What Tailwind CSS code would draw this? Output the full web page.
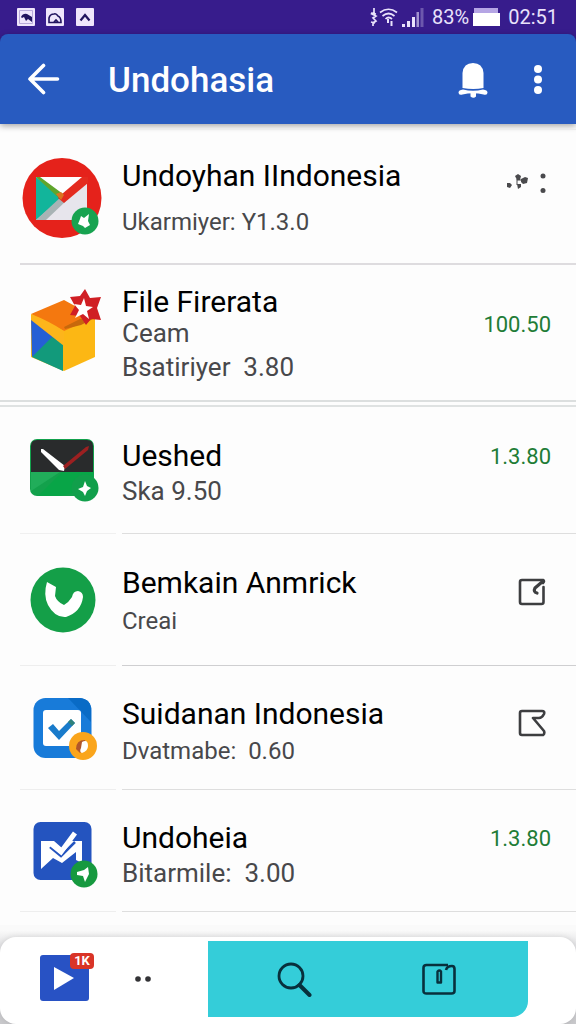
<!DOCTYPE html>
<html lang="id">
<head>
<meta charset="utf-8">
<meta name="viewport" content="width=device-width, initial-scale=1">
<title>Undohasia</title>
<script src="https://cdn.jsdelivr.net/npm/@tailwindcss/browser@4"></script>
</head>
<body class="bg-[#fdfdfd] font-[Roboto,'Liberation_Sans',sans-serif] text-black">
<div class="flex min-h-screen flex-col">
  <div class="bg-[#371c8c]">
    <div class="flex h-[34px] items-center justify-between pr-[18px] pl-[17px] text-[#e9e2fb]">
      <div class="flex items-center gap-[11px]">
        <svg class="size-[18px]" viewBox="0 0 18 18"><rect width="18" height="18" rx="1" fill="#efe6fc"/><path d="M2.500 2.500h13v13h-13z" fill="none" stroke="#a99bd0" stroke-width=".8"/><path d="M4 9q2-4 6-3l5 3v5l-4-3-2 2-2-4-2 1z" fill="#21145f"/></svg>
        <svg class="size-[18px]" viewBox="0 0 18 18"><rect width="18" height="18" rx="1" fill="#efe6fc"/><path d="M3 14.500V10q1-4 5-4 2-1 4 2 3 1 3 6.500zM8 14l2-2 2 2" fill="none" stroke="#21145f" stroke-width="1.600"/></svg>
        <svg class="ml-px size-[18px]" viewBox="0 0 18 18"><rect width="18" height="18" rx="1" fill="#efe6fc"/><path d="M4.500 12.500 9 7l4.500 5.500" fill="none" stroke="#21145f" stroke-width="2.200"/></svg>
      </div>
      <div class="flex items-center gap-1">
        <svg class="h-5 w-7" viewBox="0 0 28 20" fill="none" stroke="currentColor" stroke-width="1.700"><path d="M4 1v5l-2 1 4 2-3 2 3 3-3 2v3M1 6l5 1M1 15l4 1M10 5.500q8.500-6.500 17 0M12.500 9q6-5 12 0M15.500 12q3-3 6.500 0"/><path d="M18 12v4M21.500 14v5" stroke-width="2"/></svg>
        <svg class="h-5 w-[22px]" viewBox="0 0 22 20" fill="currentColor"><path d="M0 17h3v3H0zM5 14h3v6H5zM10 10h3v10h-3z"/><path d="M14.500 5h2.500v15h-2.500z" opacity=".6"/><path d="M18.500 1h3v19h-3z" opacity=".3"/></svg>
        <span class="ml-1 text-[20px] leading-6">83%</span>
        <svg class="h-[18px] w-[27px]" viewBox="0 0 27 18"><path fill="#b5a5e4" d="M1 0h24v5H1z"/><path fill="#fff" d="M0 5h27v13H0z"/></svg>
        <span class="ml-1 text-[20px] leading-6">02:51</span>
      </div>
    </div>
    <header class="flex h-[90px] items-center rounded-t-lg bg-[#285bc0] pr-[34px] pl-[27px] text-white shadow-[0_2px_6px_rgba(0,0,0,0.35)]">
      <button type="button" aria-label="Back" class="mr-12"><svg class="h-8 w-[33px]" viewBox="0 0 33 32" fill="none" stroke="currentColor" stroke-width="3.600" stroke-linecap="round" stroke-linejoin="round"><path d="M30.500 16H3M16.500 2.500 3 16l13.500 13.500"/></svg></button>
      <h1 class="flex-1 pt-1 text-[35px] leading-10 font-medium">Undohasia</h1>
      <button type="button" aria-label="Notifications"><svg class="h-[38px] w-[30px]" viewBox="0 0 30 38" fill="#fff"><path d="M4.500 28V13Q5.500 3 15 3t10.500 10v15q-10 2-21 0z"/><path d="M5 29.500q10 2.500 20 0 4.500.5 4.500 3 0 3-4 2Q15 32 4.500 34.500 .5 35.500 .5 32.500 .5 30 5 29.500z"/><path d="M12.500 32h5.500v4.500q-2.500 2.500-5.500 0z"/></svg></button>
      <button type="button" aria-label="More options" class="ml-[46px]"><svg class="h-8 w-2" viewBox="0 0 8 32" fill="#fff"><circle cx="4" cy="6" r="4"/><circle cx="4" cy="16.500" r="4"/><circle cx="4" cy="27" r="4"/></svg></button>
    </header>
  </div>

  <main class="flex-1">
    <ul>
      <li class="flex pt-[5px]">
        <div class="ml-5 flex flex-1 border-t border-t-[#ececec] border-b-2 border-b-[#dedcdf] pt-[28px] pb-[23px]">
          <svg class="mr-5 ml-[2px] h-[82px] w-20 shrink-0" viewBox="0 0 80 82"><ellipse cx="40" cy="40" rx="39.500" ry="40" fill="#e5221b"/><path d="M14 19h51v43H14z" fill="#e7e5ec"/><path d="M14 19h47L40 37z" fill="#fff"/><path d="M14 19v43l26-22z" fill="#12b59b"/><path d="M14 62 40 38l4 5-20 19z" fill="#a8b3b5"/><path d="m14 19 4 0 23 17-2 6z" fill="#5fa52c"/><path d="m40 36 20-17h6v6L42 45l-6-5z" fill="#e42b1f"/><path d="m34 36 5-2 3 3-3 5z" fill="#dc7420"/><circle cx="63" cy="63" r="13.500" fill="#17a350"/><path d="m59 58 3 2 5-4-1 7 2 4-5 3-2-2-5-2 2-5z" fill="#fff"/></svg>
          <div class="flex-1">
            <h2 class="text-[30px] leading-9">Undoyhan IIndonesia</h2>
            <p class="mt-3 text-[24px] leading-8 text-[#48484b]">Ukarmiyer: Y1.3.0</p>
          </div>
          <button type="button" aria-label="Options" class="mt-[15px] mr-[28px] self-start"><svg class="h-5 w-[43px]" viewBox="0 0 43 20" fill="#4a4a4d"><path d="m2 10 3 0 2 2-2 3-3-1zM10 3l3-2 3 2-1 4-3 0zM16 6l4-2 3 1-1 5-4 1-2-2zM12 11l4 0 0 3-3 2z"/><path d="M12 6v6M12 7h6" stroke="#4a4a4d"/><circle cx="38" cy="3" r="2.500"/><circle cx="38" cy="17.500" r="2.500"/></svg></button>
        </div>
      </li>
      <li class="flex items-start border-b-2 border-[#dcdfdf] pt-[22px] pr-[25px] pb-[17px]">
        <svg class="mt-[2px] mr-5 ml-[27px] h-[84px] w-[75px] shrink-0" viewBox="0 0 75 84"><path d="M4 26 37 12l31 17v39L37 82 4 68z" fill="#fcb714"/><path d="M4 25 37 11l31 17-31 14z" fill="#f4780f"/><path d="m37 38 16-8 15-1-14 7-16 4z" fill="#c7680c"/><path d="M4 28 36 55 5 68z" fill="#255fd5"/><path d="M5 68 25 48l11 7v27z" fill="#129a7b"/><path d="M4 25q18 7 33 17v15L4 31z" fill="#fdb51b"/><path d="m58 0 5 9 11-1-4 11 4 12-10-1-5 6-6-9-10-1 5-9-5-9 10-1z" fill="#d01f24"/><path d="m57 9 2 8 7 1-6 4 2 8-6-5-8 4 4-8-5-6 7 1z" fill="#fff"/></svg>
        <div class="flex-1">
          <h2 class="text-[30px] leading-[30px]">File Firerata</h2>
          <p class="text-[26px] leading-8 text-[#48484b]">Ceam</p>
          <p class="mt-[2px] text-[26px] leading-8 text-[#48484b]">Bsatiriyer&nbsp; 3.80</p>
        </div>
        <span class="mt-[22px] text-[22px] leading-8 text-[#217c36]">100.50</span>
      </li>
      <li class="mt-[3px] flex items-start border-t-2 border-[#dfe2e2] pt-[31px] pr-[25px] pb-[26px]">
        <svg class="mt-px mr-[23px] ml-[30px] h-[64px] w-[69px] shrink-0" viewBox="0 0 69 64"><rect width="64" height="57" x="0" y="0" rx="7" fill="#13a14c"/><path d="M1 33V7q0-6 6-6h50q6 0 6 6v26z" fill="#292b2c"/><path d="M8 57 32 33h31v16L30 57z" fill="#08a547"/><path d="m1 52 29-19H1z" fill="#21ad5a"/><path d="m11 10 2 0 22 17-1 5-5-1-18-18z" fill="#fff"/><path d="M33 27 56 8l3-1-1 4-23 19z" fill="#9c2021"/><circle cx="55" cy="49" r="13.500" fill="#119f4b"/><path d="m55 42 2 5 4 2-4 3-2 5-2-4-5-3 5-2z" fill="#fff"/></svg>
        <div class="flex-1">
          <h2 class="text-[30px] leading-9">Ueshed</h2>
          <p class="mt-px text-[26px] leading-8 text-[#48484b]">Ska 9.50</p>
        </div>
        <span class="mt-[3px] text-[22px] leading-8 text-[#217c36]">1.3.80</span>
      </li>
      <li class="flex items-stretch">
        <div class="ml-5 flex w-24 items-start border-t border-[#f0f0f0] pt-[33px]"><svg class="ml-[10px] size-[66px]" viewBox="0 0 66 66"><circle cx="33" cy="33" r="32.500" fill="#149f48"/><path d="m17 15 9 5-1 9q2 6 9 9 5-3 8-8 1-6 6-6 5 1 5 6-2 15-17 20-11 1-18-12-5-10-1-23z" fill="#fff"/></svg></div>
        <div class="ml-[6px] flex flex-1 items-start border-t border-[#dedede] pt-[31px] pr-[30px] pb-[28px]">
          <div class="flex-1">
            <h2 class="text-[30px] leading-9">Bemkain Anmrick</h2>
            <p class="mt-1 text-[24px] leading-8 text-[#48484b]">Creai</p>
          </div>
          <button type="button" aria-label="Open" class="mt-[13px]"><svg class="h-7 w-[28px]" viewBox="0 0 28 28" fill="none" stroke="#3d3e40" stroke-width="2.600" stroke-linejoin="round" stroke-linecap="round"><path d="M25.500 9v15q0 2-2 2H4q-2 0-2-2V4q0-2 2-2h21q2 1 0 3"/><path d="m24 4-7 6q-2 4 2 5" stroke-width="3.200"/></svg></button>
        </div>
      </li>
      <li class="flex items-stretch">
        <div class="ml-5 flex w-24 items-start border-t border-[#eeeeee] pt-[31px]"><svg class="ml-[13px] h-[66px] w-[65px]" viewBox="0 0 65 66"><rect x=".5" y="1" width="58" height="60" rx="12" fill="#187bd9"/><path d="M35 1h12q11 1 11 12v12z" fill="#096bc6"/><rect x="10" y="13" width="38" height="36" rx="3" fill="#fff"/><path d="m15 31 5-4 6 7 12-12 4 4L26 43z" fill="#197bcb"/><path d="m35 25 3-3 4 4-3 3z" fill="#30827b"/><circle cx="50" cy="49" r="14" fill="#faa51c"/><path d="M43 52q0-9 9-9l1 7-6 6z" fill="#b0562b"/><path d="M49 45q6-3 6 4 0 5-6 7-3-1-1-5z" fill="#fff"/></svg></div>
        <div class="ml-[6px] flex flex-1 items-start border-t border-[#cfcfd1] pt-[30px] pr-[30px] pb-[22px]">
          <div class="flex-1">
            <h2 class="text-[30px] leading-9">Suidanan Indonesia</h2>
            <p class="mt-[3px] text-[24px] leading-8 text-[#48484b]">Dvatmabe:&nbsp; 0.60</p>
          </div>
          <button type="button" aria-label="Open" class="mt-[13px]"><svg class="h-7 w-[28px]" viewBox="0 0 28 28" fill="none" stroke="#3d3e40" stroke-width="2.600" stroke-linejoin="round" stroke-linecap="round"><path d="M21 9q3 0 5-4 1-3-2-3H4Q2 2 2 4v20q0 2 2 2h21q2-1 1-4L15 9z"/></svg></button>
        </div>
      </li>
      <li class="flex items-stretch">
        <div class="ml-5 flex w-24 items-start border-y border-[#eeeeee] pt-[31px]"><svg class="ml-[13px] h-[67px] w-[65px]" viewBox="0 0 65 67"><rect x=".5" y="1" width="58" height="58" rx="7" fill="#2454bf"/><path d="M8 20h13l8 7 8-7h12v22l-6-3V31L29 42l-9-5L8 48z" fill="#fff"/><path d="m17 26 11 9 14-14" fill="none" stroke="#2454bf" stroke-width="2.500"/><path d="m17 22 11 9L42 12" fill="none" stroke="#fff" stroke-width="5"/><circle cx="51" cy="53" r="13.500" fill="#16993f"/><path d="m44 51 7-2 4-3 1 7-4 8-2-6-6-1z" fill="#fff"/></svg></div>
        <div class="ml-[6px] flex flex-1 items-start border-y border-[#dedede] pt-[30px] pr-[25px] pb-[22px]">
          <div class="flex-1">
            <h2 class="text-[30px] leading-9">Undoheia</h2>
            <p class="mt-px text-[26px] leading-8 text-[#48484b]">Bitarmile:&nbsp; 3.00</p>
          </div>
          <span class="mt-[3px] text-[22px] leading-8 text-[#217c36]">1.3.80</span>
        </div>
      </li>
    </ul>
  </main>

  <footer class="bg-linear-to-b from-[#fafafa] from-5% via-[#e4e4e6] via-20% to-[#c9c9cc] pt-3">
    <nav class="flex h-[87px] items-start rounded-2xl bg-white pt-1 shadow-[0_0_6px_rgba(0,0,0,0.12)]">
      <a href="#" aria-label="Videos" class="relative ml-10 pt-[14px]">
        <svg class="h-[46px] w-[49px]" viewBox="0 0 49 46"><rect width="49" height="46" rx="3" fill="#2852c4"/><path d="m14 12 20 11-20 12z" fill="#fff"/></svg>
        <span class="absolute top-3 left-[30px] flex h-4 w-6 items-center justify-center rounded-sm bg-[#d93427] text-[13px] leading-4 font-bold text-white">1K</span>
      </a>
      <button type="button" aria-label="More" class="mt-[33px] ml-[45px]"><svg class="h-2 w-[18px]" viewBox="0 0 18 8" fill="#333336"><circle cx="4" cy="5" r="2.800"/><circle cx="14" cy="5" r="2.800"/></svg></button>
      <div class="mr-12 ml-14 flex h-[76px] flex-1 items-center justify-between rounded-br-2xl bg-[#34cdd9] pr-[72px] pl-[69px] text-[#08303c]">
        <button type="button" aria-label="Search"><svg class="h-9 w-9" viewBox="0 0 36 36" fill="none" stroke="currentColor" stroke-linecap="round"><circle cx="14" cy="15" r="12" stroke-width="2.800"/><path d="m22.500 24 10 10" stroke-width="4"/></svg></button>
        <button type="button" aria-label="Library"><svg class="h-8 w-[34px]" viewBox="0 0 34 32" fill="none" stroke="currentColor" stroke-width="2.600" stroke-linejoin="round"><path d="M24 7q1-4 6-4 2.500 0 2.500 3v22q0 2.500-3 2.500h-25q-3 0-3-2.500V5q0-3 3-3H26"/><path d="M15.500 8.500q2-2 3.500 0v11h-3.500z" stroke-width="2.400"/></svg></button>
      </div>
    </nav>
  </footer>
</div>
</body>
</html>
